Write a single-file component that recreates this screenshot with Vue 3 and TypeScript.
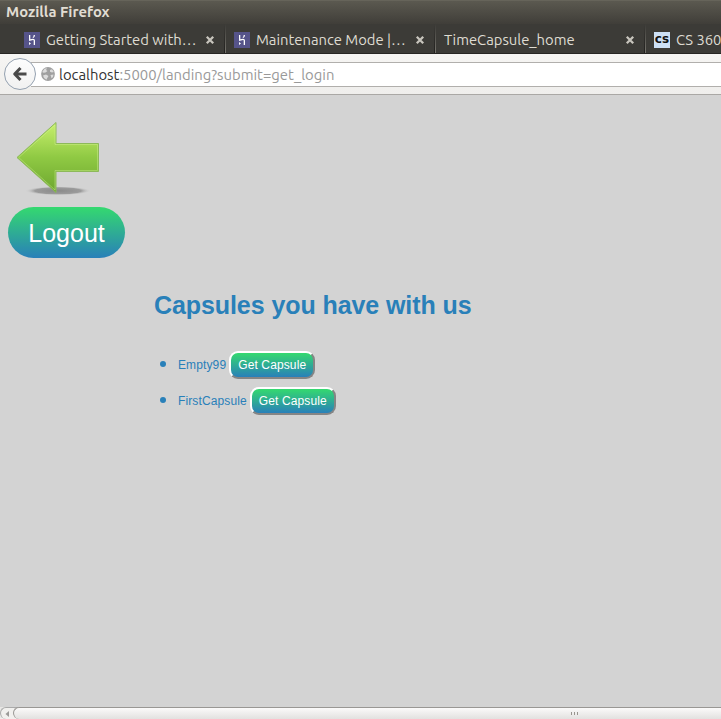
<script setup lang="ts">
interface Tab {
  title: string
  icon: 'heroku' | 'cs' | null
}

const tabs: Tab[] = [
  { title: 'Getting Started with…', icon: 'heroku' },
  { title: 'Maintenance Mode |…', icon: 'heroku' },
  { title: 'TimeCapsule_home', icon: null },
  { title: 'CS 360', icon: 'cs' },
]

const capsules: string[] = ['Empty99', 'FirstCapsule']
</script>

<template>
  <div class="window">
    <header class="titlebar"><span>Mozilla Firefox</span></header>

    <nav class="tabs">
      <div v-for="tab in tabs" :key="tab.title" class="tab">
        <svg v-if="tab.icon === 'heroku'" class="favicon" viewBox="0 0 16 16">
          <rect width="16" height="16" fill="#56548a" />
          <path d="M5 3h1.300v4.200L9 6.700Q11 6.700 11 8.500V13H9.700V8.500Q9.700 8 9 8L5 9zM9.700 3H11Q11 4.800 9.800 5.800H8.500Q9.700 4.500 9.700 3zM5 10L7 11.500L5 13z" fill="#fff" />
        </svg>
        <span v-else-if="tab.icon === 'cs'" class="favicon cs">cs</span>
        <span class="tab-title">{{ tab.title }}</span>
        <svg class="close" viewBox="0 0 10 10">
          <path d="M1.800 1.800L8.200 8.200M8.200 1.800L1.800 8.200" stroke="#c8c5bd" stroke-width="2.300" />
        </svg>
      </div>
    </nav>

    <div class="toolbar">
      <button class="back" aria-label="Back">
        <svg width="16" height="16" viewBox="0 0 16 16">
          <path d="M8.500 2L2.700 8L8.500 14M3 8H14.500" fill="none" stroke="#4a4a4a" stroke-width="3" stroke-linejoin="round" />
        </svg>
      </button>
      <div class="address">
        <svg class="globe" width="14" height="14" viewBox="0 0 14 14">
          <circle cx="7" cy="7" r="6.900" fill="#a0a0a0" />
          <path d="M1.200 5L3.500 1.800L6 1.200L5 3L6.500 4L4.500 5.500L2.500 5.800zM9 3L11 2.300L12.800 5L11 5.500L9 4.800zM2 8.500L5 7.500L7.500 9L6 11.500L5.500 12.800L3 11zM9.500 8L12.500 7.500L12 10L10.500 11.200z" fill="#dcdcdc" />
        </svg>
        <span class="url"><b>localhost</b>:5000/landing?submit=get_login</span>
      </div>
    </div>

    <main class="page">
      <svg class="arrow" width="92" height="80" viewBox="0 0 92 80">
        <defs>
          <linearGradient id="leaf" x1="0" y1="0" x2="0" y2="1">
            <stop offset="0" stop-color="#c8f06d" />
            <stop offset=".5" stop-color="#8fc943" />
            <stop offset="1" stop-color="#6da62f" />
          </linearGradient>
          <radialGradient id="shade">
            <stop offset="0" stop-color="#8a8a8a" />
            <stop offset=".7" stop-color="#9b9b9b" />
            <stop offset="1" stop-color="#d3d3d3" stop-opacity="0" />
          </radialGradient>
        </defs>
        <ellipse cx="50" cy="70.800" rx="33" ry="4.500" fill="url(#shade)" />
        <path d="M9 37.500L48 2.500V23.500H90.500V51.500H48V72.500Z" fill="url(#leaf)" stroke="#8db95a" />
        <path d="M10.700 37.500L47 5V24.500H89.500V50.500H47V70Z" fill="none" stroke="#d6f59b" stroke-opacity=".4" />
      </svg>
      <button class="logout">Logout</button>

      <section class="content">
        <h1>Capsules you have with us</h1>
        <ul>
          <li v-for="name in capsules" :key="name">
            <i class="bullet"></i>
            <span class="name">{{ name }}</span>
            <button class="get">Get Capsule</button>
          </li>
        </ul>
      </section>
    </main>

    <footer class="scrollbar">
      <div class="step">
        <svg width="6" height="8" viewBox="0 0 6 8"><path d="M5 1L1.500 4L5 7z" fill="#9b9a98" /></svg>
      </div>
      <div class="thumb"><i></i><i></i><i></i></div>
    </footer>
  </div>
</template>

<style>
body { overflow: hidden; }
</style>

<style scoped>
* { box-sizing: border-box; }
button { margin: 0; padding: 0; font-family: "Liberation Sans", Arial, sans-serif; color: #fff; }
.window {
  width: 721px;
  height: 719px;
  overflow: hidden;
  display: flex;
  flex-direction: column;
  background: #d3d3d3;
  font-family: Ubuntu, "Noto Sans", sans-serif;
}
.titlebar {
  height: 24px;
  flex: none;
  padding-left: 6px;
  border-top: 1px solid #66645a;
  background: linear-gradient(#5b5950, #403e39);
  color: #e1ddd3;
  font-size: 14.8px;
  font-weight: 700;
  line-height: 22px;
}
.tabs {
  height: 30px;
  flex: none;
  display: flex;
  padding-left: 16px;
  background: #3c3b37;
  border-bottom: 1px solid #272623;
}
.tab {
  width: 210px;
  flex: none;
  display: flex;
  align-items: center;
  padding: 2px 11px 0 8px;
  background:
    linear-gradient(#3c3b37, #22211f) right 1px top 0 / 1px 100% no-repeat,
    linear-gradient(#3c3b37, #77756e) right 0 top 0 / 1px 100% no-repeat;
}
.favicon { width: 16px; height: 16px; flex: none; margin-right: 6px; }
.cs {
  background: #cde0f5;
  color: #111;
  font: 700 12px/14px "DejaVu Sans", sans-serif;
  text-align: center;
}
.tab-title { color: #dfdbd2; font-size: 14.8px; line-height: 20px; white-space: nowrap; }
.close { width: 10px; height: 10px; flex: none; margin-left: auto; }
.toolbar {
  height: 41px;
  flex: none;
  display: flex;
  align-items: center;
  background: linear-gradient(#f6f5f3, #efeeec);
  border-bottom: 1px solid #aaa8a5;
}
.back {
  width: 32px;
  height: 32px;
  flex: none;
  margin-left: 4px;
  display: flex;
  align-items: center;
  justify-content: center;
  border: 1px solid #94a1b0;
  border-radius: 50%;
  background: linear-gradient(#fdfdfd, #f1f1f1);
  position: relative;
  z-index: 1;
}
.address {
  height: 25px;
  flex: 1;
  margin-left: -5px;
  padding-left: 10px;
  display: flex;
  align-items: center;
  gap: 4px;
  background: #fff;
  border: solid #b1afac;
  border-width: 1px 0;
}
.url { padding-top: 1px; font-size: 14.85px; line-height: 20px; color: #999; white-space: nowrap; }
.url b { font-weight: 400; color: #333; }
.page {
  flex: 1;
  padding: 25px 0 0 8px;
  display: flex;
  flex-direction: column;
  align-items: flex-start;
  font-family: "Liberation Sans", Arial, sans-serif;
  color: #2980b9;
}
.logout {
  width: 117px;
  height: 51px;
  margin-top: 7px;
  padding-top: 2px;
  border: 0;
  border-radius: 28px;
  background: linear-gradient(#34d96f, #2980b9);
  font-size: 25px;
  line-height: 49px;
}
.content { padding: 32px 0 0 146px; }
h1 { margin: 0; font-size: 25px; line-height: 30px; letter-spacing: -0.08px; white-space: nowrap; }
ul { list-style: none; margin: 31px 0 0; padding: 0; display: flex; flex-direction: column; gap: 8px; }
li { height: 28px; display: flex; align-items: center; padding-left: 6px; }
.bullet { width: 6px; height: 6px; margin: -3px 12px 0 0; border-radius: 50%; background: #2980b9; }
.name { margin-right: 3px; font-size: 12px; letter-spacing: 0.12px; }
.get {
  width: 86px;
  height: 28px;
  border: 2px solid;
  border-color: #fff #858585 #858585 #fff;
  border-radius: 9px;
  background: linear-gradient(#34d96f, #2980b9);
  font-size: 12px;
  letter-spacing: 0.12px;
}
.scrollbar {
  height: 12px;
  flex: none;
  display: flex;
  background: #e8e7e5;
  border-bottom: 1px solid #efefed;
}
.step {
  width: 18px;
  height: 12px;
  flex: none;
  padding-left: 3px;
  display: flex;
  align-items: center;
  border-top: 1px solid #aaa;
  border-left: 1px solid #aaa;
  border-radius: 6px 0 0 6px;
  background: #f1f0ee;
}
.thumb {
  flex: 1;
  height: 12px;
  margin-left: -5px;
  padding-left: 557px;
  display: flex;
  align-items: center;
  gap: 2px;
  border-top: 1px solid #999794;
  border-left: 1px solid #999794;
  border-radius: 7px 0 0 7px;
  background: linear-gradient(#fbfafa, #e2e1df);
}
.thumb i { width: 1px; height: 3px; background: #99958f; }
</style>
